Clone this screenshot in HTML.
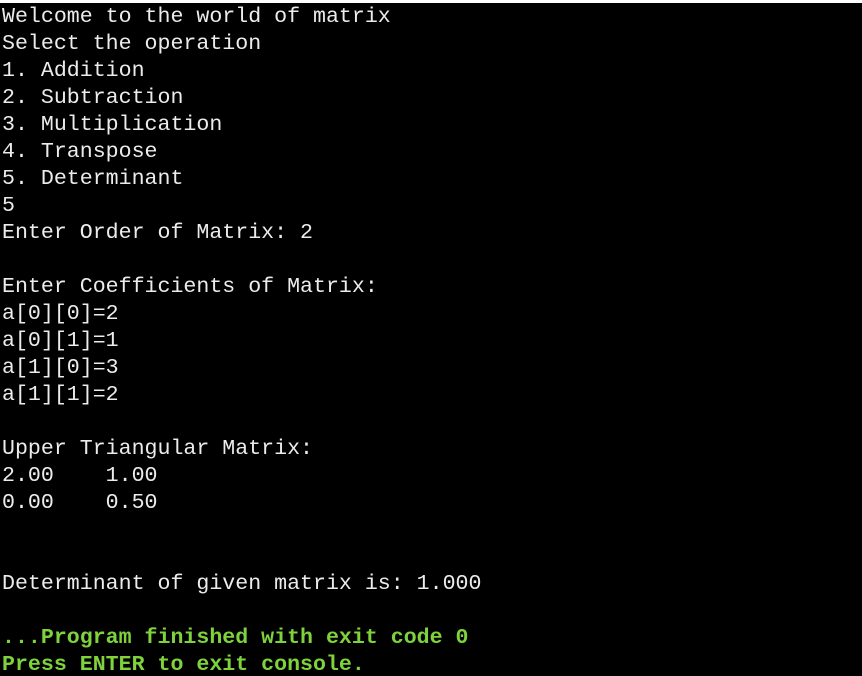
<!DOCTYPE html>
<html><head><style>
html,body{margin:0;padding:0;background:#000;width:862px;height:676px;overflow:hidden}
.top{height:3px;background:#fff}
pre{margin:0;padding:1px 0 0 2px;font-family:"Liberation Mono",monospace;font-size:21.6px;line-height:27px;color:#ececec;white-space:pre}
.g{color:#7ed23c;font-weight:bold}
</style></head><body><div class="top"></div><pre>Welcome to the world of matrix
Select the operation
1. Addition
2. Subtraction
3. Multiplication
4. Transpose
5. Determinant
5
Enter Order of Matrix: 2

Enter Coefficients of Matrix:
a[0][0]=2
a[0][1]=1
a[1][0]=3
a[1][1]=2

Upper Triangular Matrix:
2.00    1.00
0.00    0.50


Determinant of given matrix is: 1.000

<span class="g">...Program finished with exit code 0
Press ENTER to exit console.</span></pre></body></html>
